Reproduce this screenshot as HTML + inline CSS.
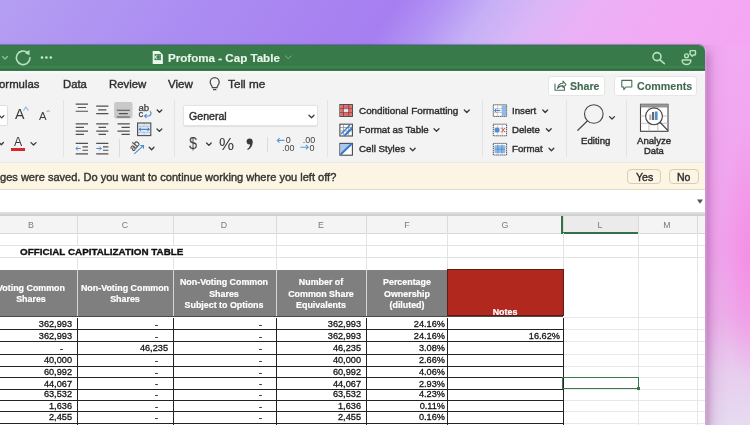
<!DOCTYPE html>
<html><head><meta charset="utf-8">
<style>
*{margin:0;padding:0;box-sizing:border-box}
html,body{width:750px;height:425px;overflow:hidden}
body{position:relative;font-family:"Liberation Sans",sans-serif;
 background:linear-gradient(125deg,#b49ef2 0%,#ab8cf2 20%,#a67ef0 38%,#b496f4 43%,#c6b0f6 47%,#dab6f7 52%,#eab0f6 57%,#f2aaf5 64%,#f4a6f2 76%,#f2a4ee 100%);}
.a{position:absolute}
#bg2{left:700px;top:45px;width:50px;height:380px;background:radial-gradient(ellipse 30px 130px at 50px 210px,rgba(246,135,226,.75),rgba(246,135,226,0)),linear-gradient(90deg,rgba(190,120,190,.18),rgba(190,120,190,0) 60%),linear-gradient(180deg,#f2aaf2 0%,#f0a4ec 55%,#ecb0ea 72%,#e8cdee 86%,#e6dbf0 100%)}
#shadow{left:704px;top:60px;width:10px;height:365px;background:linear-gradient(90deg,rgba(150,60,150,.25),rgba(150,60,150,0))}
#win{left:-10px;top:45px;width:715px;height:400px;background:#f3f3f3;border-top-right-radius:6px;overflow:hidden;box-shadow:0 -1px 1px rgba(60,70,110,.45),1.5px 0 0 rgba(250,215,250,.35),4px 6px 9px rgba(120,40,120,.38)}
#title{left:0;top:0;width:715px;height:26px;background:linear-gradient(180deg,#3a6e58 0,#387a4a 1px,#387a4a 100%)}
.t{position:absolute;white-space:pre;line-height:1;will-change:transform;-webkit-text-stroke:0.4px currentColor}
.n{-webkit-text-stroke:0.15px currentColor}
svg{position:absolute;overflow:visible}
</style></head><body>
<div id="bg2" class="a"></div>
<div id="win" class="a">
  <div id="title" class="a"></div>
  <div class="a" style="left:0;top:21.4px;width:715px;height:1.4px;background:#3e8250"></div>
  <div class="a" style="left:0;top:23.6px;width:715px;height:1.9px;background:#336f44"></div>
  <div class="a" style="left:0;top:26px;width:715px;height:3.2px;background:linear-gradient(180deg,#fbfcfb,#f5f5f5)"></div>
</div>

<!-- title bar content -->
<svg style="left:0;top:0" width="750" height="75" viewBox="0 0 750 75">
  <g fill="none" stroke="#8fc49a" stroke-width="1.2" stroke-linecap="round" stroke-linejoin="round">
    <path d="M2.5 56.5 L5 59 L7.5 56.5"/>
  </g>
  <g fill="none" stroke="#b9e3c0" stroke-width="1.55" stroke-linecap="round">
    <path d="M27.6 52.6 A6.8 6.8 0 1 0 30 57.8"/>
  </g>
  <path d="M24.8 52.9 L29.6 50 L29.4 55.2 Z" fill="#b9e3c0"/>
  <g fill="#c8eccc"><circle cx="42" cy="57.5" r="1.3"/><circle cx="46.4" cy="57.5" r="1.3"/><circle cx="50.8" cy="57.5" r="1.3"/></g>
  <!-- doc icon -->
  <path d="M152.7 50.9 H159.2 L162.9 54.7 V63.9 H152.7 Z" fill="#eaf7ec"/>
  <rect x="154.4" y="54.1" width="6.6" height="6" fill="#3f7f50"/>
  <path d="M161 55.8 H159 M161 58.2 H159" stroke="#9cc8a6" stroke-width="0.7"/>
  <path d="M153.6 55.2 L157.2 59.1 M157.2 55.2 L153.6 59.1" stroke="#bfe6c6" stroke-width="1.2"/>
  <g fill="none" stroke="#7fb88a" stroke-width="1" stroke-linecap="round"><path d="M285.5 56 L288.3 58.6 L291 56"/></g>
  <!-- search -->
  <g fill="none" stroke="#b9e3c0" stroke-width="1.55" stroke-linecap="round">
    <circle cx="657" cy="56.6" r="4.0"/><path d="M660 59.8 L664.4 63.6"/>
  </g>
  <!-- people -->
  <g fill="none" stroke="#b9e3c0" stroke-width="1.45" stroke-linejoin="round">
    <circle cx="686.5" cy="55.8" r="1.9"/>
    <path d="M682.6 60 H690.4 Q691 60 690.8 60.8 A4.2 3.6 0 0 1 682.2 60.8 Q682 60 682.6 60 Z"/>
    <path d="M690.8 50.6 H694.8 Q695.5 50.6 695.5 51.3 V54.2 Q695.5 54.9 694.8 54.9 H693.4 L692.2 56.3 L691.3 54.9 Q690.1 54.9 690.1 54.2 V51.3 Q690.1 50.6 690.8 50.6 Z"/>
  </g>
</svg>
<div class="t" style="left:168px;top:52px;font-size:11.6px;font-weight:bold;color:#e9f6ea;-webkit-text-stroke:0.15px #e9f6ea">Profoma - Cap Table</div>

<!-- tabs -->
<svg style="left:0;top:0" width="750" height="100"><g fill="none" stroke="#4a4a4a" stroke-width="1.3" stroke-linejoin="round"><path d="M212.4 87.6 C212.2 85.6 210.2 84.6 210.2 82.2 A4.5 4.5 0 0 1 219.2 82.2 C219.2 84.6 217.2 85.6 217 87.6 Z"/><path d="M213 89.6 H216.4"/></g></svg>

<div class="t" style="left:-0.7px;top:78.9px;font-size:11.4px;color:#2e2e2e">ormulas</div>
<div class="t" style="left:63px;top:78.9px;font-size:11.3px;color:#2e2e2e">Data</div>
<div class="t" style="left:108.6px;top:78.9px;font-size:11.4px;color:#2e2e2e">Review</div>
<div class="t" style="left:167.6px;top:78.4px;font-size:11.6px;color:#2e2e2e">View</div>
<div class="t" style="left:228px;top:78.2px;font-size:11.75px;color:#2e2e2e">Tell me</div>


<!-- share / comments -->
<div class="a" style="left:547.6px;top:75.6px;width:57px;height:20px;background:#fff;border:1px solid #e6e6e6;border-radius:3px"></div>
<div class="a" style="left:614.4px;top:75.6px;width:82.5px;height:20px;background:#fff;border:1px solid #e6e6e6;border-radius:3px"></div>
<svg style="left:0;top:0" width="750" height="100">
  <g fill="none" stroke="#4a6e58" stroke-width="1.1" stroke-linejoin="round" stroke-linecap="round">
    <path d="M555 84 V90.3 H564.5 V87.5"/>
    <path d="M557.5 88.5 C558 85 560 83.3 563 83.3 V81 L566 84.6 L563 87.7 V85.6 C560.6 85.6 558.8 86.6 557.5 88.5 Z"/>
    <path d="M621.8 80.4 H631.8 V87 H626 L623.8 89.6 V87 H621.8 Z"/>
  </g>
</svg>
<div class="t" style="left:569.6px;top:81px;font-size:10.6px;font-weight:bold;color:#41694f;-webkit-text-stroke:0.1px #41694f">Share</div>
<div class="t" style="left:637px;top:81px;font-size:10.7px;font-weight:bold;color:#41694f;-webkit-text-stroke:0.1px #41694f">Comments</div>

<!-- ribbon separators -->
<div class="a" style="left:62.7px;top:100.2px;width:1px;height:56.5px;background:#e3e3e3"></div>
<div class="a" style="left:174px;top:100.2px;width:1px;height:56.5px;background:#e3e3e3"></div>
<div class="a" style="left:327.3px;top:100.2px;width:1px;height:56.5px;background:#e3e3e3"></div>
<div class="a" style="left:481.7px;top:100.2px;width:1px;height:56.5px;background:#e3e3e3"></div>
<div class="a" style="left:566.2px;top:100.2px;width:1px;height:56.5px;background:#e3e3e3"></div>
<div class="a" style="left:626.4px;top:100.2px;width:1px;height:56.5px;background:#e3e3e3"></div>
<div class="a" style="left:119px;top:139px;width:1px;height:18px;background:#dcdcdc"></div>
<div class="a" style="left:267.3px;top:137px;width:1px;height:15px;background:#dcdcdc"></div>

<!-- font group -->
<div class="a" style="left:-5px;top:105.2px;width:12.7px;height:20.4px;background:#fff;border:1px solid #dedede;border-radius:2px"></div>
<div class="t" style="left:14.5px;top:107.4px;font-size:14.2px;color:#3a3a3a;-webkit-text-stroke:0">A</div>
<div class="t" style="left:38.6px;top:110.8px;font-size:11.3px;color:#3a3a3a;-webkit-text-stroke:0">A</div>
<div class="t" style="left:14.3px;top:136px;font-size:12.2px;color:#3a3a3a;-webkit-text-stroke:0">A</div>
<div class="a" style="left:10.9px;top:147.6px;width:14.3px;height:3px;background:#d8262a"></div>

<!-- general dropdown -->
<div class="a" style="left:182.8px;top:105.2px;width:135px;height:21px;background:#fff;border:1px solid #e4e4e4;border-radius:2px;box-shadow:0 0.5px 1px rgba(0,0,0,.08)"></div>
<div class="t" style="left:188.5px;top:110.6px;font-size:10.6px;color:#2e2e2e">General</div>
<div class="t" style="left:188.8px;top:135px;font-size:17.2px;color:#3a3a3a;-webkit-text-stroke:0;transform:scaleX(0.84);transform-origin:0 0">$</div>
<div class="t" style="left:218.9px;top:135.6px;font-size:17px;color:#3a3a3a;-webkit-text-stroke:0">%</div>

<!-- styles group -->
<div class="t" style="left:358.6px;top:105.6px;font-size:9.9px;color:#2e2e2e">Conditional Formatting</div>
<div class="t" style="left:358.6px;top:125.3px;font-size:9.75px;color:#2e2e2e">Format as Table</div>
<div class="t" style="left:358.6px;top:144.3px;font-size:9.75px;color:#2e2e2e">Cell Styles</div>

<!-- cells group -->
<div class="t" style="left:512.4px;top:105.6px;font-size:9.7px;color:#2e2e2e">Insert</div>
<div class="t" style="left:512.4px;top:125.3px;font-size:9.6px;color:#2e2e2e">Delete</div>
<div class="t" style="left:512.4px;top:144.3px;font-size:9.7px;color:#2e2e2e">Format</div>

<div class="t" style="left:581px;top:135.5px;font-size:9.65px;color:#2e2e2e">Editing</div>
<div class="t" style="left:637px;top:135.5px;font-size:9.6px;color:#2e2e2e">Analyze</div>
<div class="t" style="left:644.3px;top:145.5px;font-size:9.4px;color:#2e2e2e">Data</div>

<!--RIB-->
<svg style="left:0;top:0" width="750" height="170">
<path d="M-0.5 115.6 L1.7 117.9 L3.9 115.6" fill="none" stroke="#3a3a3a" stroke-width="1.3" stroke-linecap="round" stroke-linejoin="round"/>
<path d="M-0.8 142.5 L1.2999999999999998 144.8 L3.4 142.5" fill="none" stroke="#3a3a3a" stroke-width="1.3" stroke-linecap="round" stroke-linejoin="round"/>
<path d="M31 142.6 L33.5 145 L36 142.6" fill="none" stroke="#3a3a3a" stroke-width="1.3" stroke-linecap="round" stroke-linejoin="round"/>
<path d="M157.2 110 L159.5 112.3 L161.8 110" fill="none" stroke="#3a3a3a" stroke-width="1.3" stroke-linecap="round" stroke-linejoin="round"/>
<path d="M157 129 L159.4 131.4 L161.8 129" fill="none" stroke="#3a3a3a" stroke-width="1.3" stroke-linecap="round" stroke-linejoin="round"/>
<path d="M149.2 147.3 L151.6 149.7 L154 147.3" fill="none" stroke="#3a3a3a" stroke-width="1.3" stroke-linecap="round" stroke-linejoin="round"/>
<path d="M206.6 143 L208.89999999999998 145.4 L211.2 143" fill="none" stroke="#3a3a3a" stroke-width="1.3" stroke-linecap="round" stroke-linejoin="round"/>
<path d="M309 115.2 L311.5 117.7 L314 115.2" fill="none" stroke="#3a3a3a" stroke-width="1.3" stroke-linecap="round" stroke-linejoin="round"/>
<path d="M464.3 110 L466.8 112.5 L469.3 110" fill="none" stroke="#3a3a3a" stroke-width="1.3" stroke-linecap="round" stroke-linejoin="round"/>
<path d="M434 128.8 L436.5 131.3 L439 128.8" fill="none" stroke="#3a3a3a" stroke-width="1.3" stroke-linecap="round" stroke-linejoin="round"/>
<path d="M410.2 148.2 L412.7 150.7 L415.2 148.2" fill="none" stroke="#3a3a3a" stroke-width="1.3" stroke-linecap="round" stroke-linejoin="round"/>
<path d="M542.8 110 L545.2 112.5 L547.6 110" fill="none" stroke="#3a3a3a" stroke-width="1.3" stroke-linecap="round" stroke-linejoin="round"/>
<path d="M546.4 128.8 L548.8 131.3 L551.2 128.8" fill="none" stroke="#3a3a3a" stroke-width="1.3" stroke-linecap="round" stroke-linejoin="round"/>
<path d="M549 148.2 L551.4 150.7 L553.8 148.2" fill="none" stroke="#3a3a3a" stroke-width="1.3" stroke-linecap="round" stroke-linejoin="round"/>
<path d="M609.5 116.6 L612.0 119 L614.5 116.6" fill="none" stroke="#3a3a3a" stroke-width="1.3" stroke-linecap="round" stroke-linejoin="round"/>
<path d="M23.4 110.6 L25.9 107 L28.4 110.6" fill="none" stroke="#8fbde6" stroke-width="1.1"/>
<path d="M46.6 112 L48.2 110.4 L49.8 112" fill="none" stroke="#888" stroke-width="0.9"/>
<rect x="114.1" y="102" width="18.4" height="16.4" rx="2" fill="#c9c9c9"/>
<path d="M75.7 104.1H88 M75.7 111.2H88 M77.7 107.5H86 M96.2 106.1H108.4 M96.2 113.6H108.4 M98.2 109.8H106.4 M116.8 110.2H129.8 M116.8 117.0H129.8 M118.8 113.6H127.8 M75.7 123.9H88 M96.2 123.9H108.4 M117.5 123.9H129.8 M75.7 127.3H84 M98.5 127.3H106 M121.5 127.3H129.8 M75.7 131.1H88 M96.2 131.1H108.4 M117.5 131.1H129.8 M75.7 134.4H84 M98.5 134.4H106 M121.5 134.4H129.8 M75.7 143.4H88 M96.2 143.4H108.4 M75.7 153.9H88 M96.2 153.9H108.4 M82.5 146.8H88 M103 146.8H108.4 M82.5 150.2H88 M103 150.2H108.4" stroke="#505050" stroke-width="1.15" fill="none"/>
<path d="M75.9 148.5 H80.8 M77.8 146.6 L75.9 148.5 L77.8 150.4" stroke="#4a8fd0" stroke-width="1" fill="none"/>
<path d="M96.3 148.5 H101.2 M99.3 146.6 L101.2 148.5 L99.3 150.4" stroke="#4a8fd0" stroke-width="1" fill="none"/>
<text x="138.5" y="111.2" font-family="Liberation Sans" font-size="9.6" fill="#404040" stroke="#404040" stroke-width="0.25">ab</text>
<text x="138.5" y="117" font-family="Liberation Sans" font-size="9.6" fill="#404040" stroke="#404040" stroke-width="0.25">c</text>
<path d="M150 111.2 C151.6 112.4 151.4 115.6 148.8 116 H144.6 M146.5 114.1 L144.6 116 L146.5 117.9" stroke="#4a8fd0" stroke-width="1.15" fill="none"/>
<rect x="137.6" y="123" width="13.2" height="12.6" fill="#dce9f6" stroke="#4a4a4a" stroke-width="1.1"/>
<path d="M137.6 126.3 H150.8 M137.6 132.3 H150.8 M144.2 123 V126.3 M144.2 132.3 V135.6" stroke="#7a8a9a" stroke-width="0.6" stroke-dasharray="0.8 0.6"/>
<path d="M139.2 129.3 H149.2 M140.8 127.7 L139.2 129.3 L140.8 130.9 M147.6 127.7 L149.2 129.3 L147.6 130.9" stroke="#2d6fb8" stroke-width="1" fill="none"/>
<text x="0" y="0" font-family="Liberation Sans" font-size="9.6" fill="#404040" stroke="#404040" stroke-width="0.25" transform="translate(133.6 151.8) rotate(-50)">ab</text>
<path d="M134.2 153.9 L143.4 145.7 M140.4 145.6 H143.5 V148.7" stroke="#4a8fd0" stroke-width="1.1" fill="none"/>
<circle cx="249.6" cy="141.4" r="3.0" fill="#3a3a3a"/><path d="M252.5 141.6 C252.9 145.5 251.2 148.4 247.8 150 L247.2 149.1 C249.3 147.6 250.2 146 250.2 143.8 Z" fill="#3a3a3a"/>
<path d="M277.3 140.4 H284.4 M279.5 138.2 L277.3 140.4 L279.5 142.6" stroke="#5a9ad8" stroke-width="1.1" fill="none"/>
<text x="285.8" y="143.4" font-family="Liberation Sans" font-size="9" fill="#444">0</text>
<text x="282" y="150.9" font-family="Liberation Sans" font-size="9" fill="#444">.00</text>
<text x="302.8" y="143.4" font-family="Liberation Sans" font-size="9" fill="#444">.00</text>
<path d="M300.4 147.2 H308.2 M306 145 L308.2 147.2 L306 149.4" stroke="#5a9ad8" stroke-width="1.1" fill="none"/>
<text x="309.4" y="150.9" font-family="Liberation Sans" font-size="9" fill="#444">0</text>
<rect x="339.9" y="104.6" width="12.5" height="11.8" fill="#fff" stroke="#484848" stroke-width="1.1"/>
<rect x="340.4" y="105.1" width="11.5" height="3.5" fill="#e06a6a"/><rect x="340.4" y="112.5" width="11.5" height="3.4" fill="#e06a6a"/><rect x="340.4" y="108.6" width="3.1" height="3.9" fill="#e06a6a"/><rect x="348.6" y="108.6" width="3.3" height="3.9" fill="#e06a6a"/><rect x="343.5" y="108.6" width="5.1" height="3.9" fill="#dfe8f6"/>
<path d="M339.9 108.6 H352.4 M339.9 112.5 H352.4 M343.5 104.6 V116.4 M348.6 104.6 V116.4" stroke="#7a3a3a" stroke-width="0.7"/>
<rect x="339.9" y="124.2" width="12.5" height="11.8" fill="#fff" stroke="#484848" stroke-width="1.1"/>
<path d="M339.9 127.5 H352.4 M339.9 131 H352.4 M343.5 124.2 V136 M348.6 124.2 V136" stroke="#888" stroke-width="0.7"/>
<path d="M343 135.5 L352 126.5 V128.5 L345.5 135.5 Z" fill="#4a8ad8"/><path d="M341 134 L350 125 M344.6 136 L352.4 128.2" stroke="#3a78c8" stroke-width="1.3"/>
<rect x="339.9" y="143.4" width="12.5" height="11.8" fill="#fff" stroke="#484848" stroke-width="1.1"/>
<path d="M340.4 143.9 H351.9 L340.4 154.7 Z" fill="#a8c8ee"/><path d="M340.6 154.5 L351.8 143.8" stroke="#3a78c8" stroke-width="2"/>
<rect x="493.3" y="104.8" width="13.3" height="11.6" fill="#fff" stroke="#444" stroke-width="1" stroke-dasharray="1.3 0.7"/>
<path d="M493.3 108.7 H506.6 M493.3 112.5 H506.6 M497.7 104.8 V116.4 M502.2 104.8 V116.4" stroke="#aaa" stroke-width="0.6"/>
<rect x="493.3" y="124.2" width="13.3" height="11.6" fill="#fff" stroke="#444" stroke-width="1" stroke-dasharray="1.3 0.7"/>
<path d="M493.3 128.1 H506.6 M493.3 131.9 H506.6 M497.7 124.2 V135.8 M502.2 124.2 V135.8" stroke="#aaa" stroke-width="0.6"/>
<rect x="493.3" y="143.4" width="13.3" height="11.6" fill="#fff" stroke="#444" stroke-width="1" stroke-dasharray="1.3 0.7"/>
<path d="M493.3 147.3 H506.6 M493.3 151.1 H506.6 M497.7 143.4 V155.0 M502.2 143.4 V155.0" stroke="#aaa" stroke-width="0.6"/>
<rect x="501.8" y="105.3" width="4.3" height="10.6" fill="#8dbbe8"/>
<path d="M494.5 110.6 H500.5 M496.5 108.6 L494.5 110.6 L496.5 112.6" stroke="#3d7fd0" stroke-width="1" fill="none"/>
<circle cx="497" cy="130" r="2.5" fill="#4d8ed8"/><path d="M501.6 128 L505 132 M505 128 L501.6 132" stroke="#e05050" stroke-width="1"/>
<rect x="494.6" y="145.2" width="10.6" height="8" fill="#8dbbe8"/><path d="M494.6 149.2 H505.2 M497.9 145.2 V153.2 M501.9 145.2 V153.2" stroke="#3d6fb0" stroke-width="0.5"/>
<circle cx="593.8" cy="114" r="9.3" fill="none" stroke="#4a4a4a" stroke-width="1.15"/><path d="M587.3 121 L577.8 130.3" stroke="#4a4a4a" stroke-width="1.2" stroke-linecap="round"/>
<rect x="640.5" y="104.3" width="27.5" height="27" fill="#fff" stroke="#444" stroke-width="1.1"/>
<rect x="640.5" y="104.3" width="27.5" height="2.6" fill="#9a9a9a"/><path d="M640.5 107 H668" stroke="#666" stroke-width="0.6"/>
<path d="M640.5 116 H668 M640.5 123.3 H668 M649 107 V131.3 M657.8 107 V131.3" stroke="#aaa" stroke-width="0.7"/>
<circle cx="654" cy="116.3" r="8.4" fill="#fff" stroke="#444" stroke-width="1.15"/>
<path d="M660 122.3 L668 130.6" stroke="#444" stroke-width="1.3"/>
<rect x="649.3" y="114.5" width="2" height="5.5" fill="#aaa"/><rect x="652" y="112" width="2.2" height="8" fill="#666"/><rect x="655" y="111.5" width="2.6" height="8.5" fill="#4f8fd8"/>
</svg>
<!--/RIB-->
<!-- ribbon bottom / notification -->
<div class="a" style="left:0;top:161.8px;width:705px;height:1.5px;background:#e9e9e9"></div>
<div class="a" style="left:0;top:163px;width:705px;height:26px;background:#fcf5e3"></div>
<div class="a" style="left:0;top:188.6px;width:705px;height:1.2px;background:#e3d9c5"></div>
<div class="t" style="left:0.3px;top:171.5px;font-size:11.05px;color:#333">ges were saved. Do you want to continue working where you left off?</div>
<div class="a" style="left:627.2px;top:168.7px;width:34.3px;height:15px;background:#fcf5e3;border:1px solid #d9cdb4;border-radius:4px"></div>
<div class="a" style="left:669.2px;top:168.7px;width:30px;height:15px;background:#fcf5e3;border:1px solid #d9cdb4;border-radius:4px"></div>
<div class="t" style="left:635.6px;top:172px;font-size:10.6px;color:#2e2e2e">Yes</div>
<div class="t" style="left:676.9px;top:172px;font-size:10.5px;color:#2e2e2e">No</div>

<!-- formula bar -->
<div class="a" style="left:0;top:190px;width:705px;height:21.6px;background:#fff"></div>
<svg style="left:0;top:0" width="750" height="210"><path d="M697 199.5 H703 L700 203.8 Z" fill="#555"/></svg>
<div class="a" style="left:0;top:211.5px;width:705px;height:4.3px;background:linear-gradient(180deg,#e4e4e4,#d4d4d4 60%,#cdcdcd)"></div>
<!--GRID-->
<div class="a" style="left:0.00px;top:233.30px;width:705.00px;height:200.00px;background:#fff"></div>
<div class="a" style="left:0.00px;top:215.60px;width:705.00px;height:17.70px;background:#f4f4f4"></div>
<div class="a" style="left:562.50px;top:215.60px;width:75.50px;height:17.70px;background:#ebebeb"></div>
<div class="a" style="left:77.30px;top:215.60px;width:1.00px;height:17.70px;background:#dadada"></div>
<div class="a" style="left:172.50px;top:215.60px;width:1.00px;height:17.70px;background:#dadada"></div>
<div class="a" style="left:276.40px;top:215.60px;width:1.00px;height:17.70px;background:#dadada"></div>
<div class="a" style="left:366.00px;top:215.60px;width:1.00px;height:17.70px;background:#dadada"></div>
<div class="a" style="left:447.40px;top:215.60px;width:1.00px;height:17.70px;background:#dadada"></div>
<div class="a" style="left:562.50px;top:215.60px;width:1.00px;height:17.70px;background:#dadada"></div>
<div class="a" style="left:638.00px;top:215.60px;width:1.00px;height:17.70px;background:#dadada"></div>
<div class="a" style="left:696.80px;top:215.60px;width:1.00px;height:17.70px;background:#dadada"></div>
<div class="a" style="left:0.00px;top:232.80px;width:705.00px;height:0.80px;background:#d8d8d8"></div>
<div class="a" style="left:561.40px;top:215.60px;width:2.00px;height:18.50px;background:#35704a"></div>
<div class="a" style="left:561.40px;top:232.30px;width:76.80px;height:1.90px;background:#35704a"></div>
<div class="t" style="left:10.65px;width:40px;text-align:center;top:220.6px;font-size:8.8px;color:#7a7a7a;-webkit-text-stroke:0">B</div>
<div class="t" style="left:104.90px;width:40px;text-align:center;top:220.6px;font-size:8.8px;color:#7a7a7a;-webkit-text-stroke:0">C</div>
<div class="t" style="left:204.45px;width:40px;text-align:center;top:220.6px;font-size:8.8px;color:#7a7a7a;-webkit-text-stroke:0">D</div>
<div class="t" style="left:301.20px;width:40px;text-align:center;top:220.6px;font-size:8.8px;color:#7a7a7a;-webkit-text-stroke:0">E</div>
<div class="t" style="left:386.70px;width:40px;text-align:center;top:220.6px;font-size:8.8px;color:#7a7a7a;-webkit-text-stroke:0">F</div>
<div class="t" style="left:484.95px;width:40px;text-align:center;top:220.6px;font-size:8.8px;color:#7a7a7a;-webkit-text-stroke:0">G</div>
<div class="t" style="left:580.25px;width:40px;text-align:center;top:220.6px;font-size:8.8px;color:#7a7a7a;-webkit-text-stroke:0">L</div>
<div class="t" style="left:647.40px;width:40px;text-align:center;top:220.6px;font-size:8.8px;color:#7a7a7a;-webkit-text-stroke:0">M</div>
<div class="a" style="left:0.00px;top:245.20px;width:705.00px;height:0.80px;background:#e3e3e3"></div>
<div class="a" style="left:0.00px;top:257.40px;width:705.00px;height:0.80px;background:#e3e3e3"></div>
<div class="a" style="left:77.30px;top:233.30px;width:0.80px;height:12.00px;background:#e3e3e3"></div>
<div class="a" style="left:77.30px;top:257.40px;width:0.80px;height:12.40px;background:#e3e3e3"></div>
<div class="a" style="left:172.50px;top:233.30px;width:0.80px;height:12.00px;background:#e3e3e3"></div>
<div class="a" style="left:172.50px;top:257.40px;width:0.80px;height:12.40px;background:#e3e3e3"></div>
<div class="a" style="left:276.40px;top:233.30px;width:0.80px;height:36.50px;background:#e3e3e3"></div>
<div class="a" style="left:366.00px;top:233.30px;width:0.80px;height:36.50px;background:#e3e3e3"></div>
<div class="a" style="left:447.40px;top:233.30px;width:0.80px;height:36.50px;background:#e3e3e3"></div>
<div class="a" style="left:562.50px;top:233.30px;width:0.80px;height:36.50px;background:#e3e3e3"></div>
<div class="a" style="left:638.00px;top:233.30px;width:0.80px;height:36.50px;background:#e3e3e3"></div>
<div class="a" style="left:696.80px;top:233.30px;width:0.80px;height:36.50px;background:#e3e3e3"></div>
<div class="t" style="left:20.30px;top:247.10px;font-size:9.85px;font-weight:bold;color:#111;-webkit-text-stroke:0.35px #111">OFFICIAL CAPITALIZATION TABLE</div>
<div class="a" style="left:0.00px;top:269.50px;width:447.40px;height:46.10px;background:#7f7f7f"></div>
<div class="a" style="left:77.30px;top:269.50px;width:0.90px;height:46.10px;background:#d6d6d6"></div>
<div class="a" style="left:172.50px;top:269.50px;width:0.90px;height:46.10px;background:#d6d6d6"></div>
<div class="a" style="left:276.40px;top:269.50px;width:0.90px;height:46.10px;background:#d6d6d6"></div>
<div class="a" style="left:366.00px;top:269.50px;width:0.90px;height:46.10px;background:#d6d6d6"></div>
<div class="a" style="left:447.40px;top:268.80px;width:116.20px;height:46.80px;background:#b1281f;border:1px solid #5e1c16"></div>
<div class="a" style="left:0.00px;top:315.60px;width:563.00px;height:1.90px;background:#4a4a4a"></div>
<div class="t" style="left:-29.35px;width:120px;text-align:center;top:283.90px;font-size:8.9px;font-weight:bold;color:#fff;-webkit-text-stroke:0.2px #fff">Voting Common</div>
<div class="t" style="left:-29.35px;width:120px;text-align:center;top:295.10px;font-size:8.9px;font-weight:bold;color:#fff;-webkit-text-stroke:0.2px #fff">Shares</div>
<div class="t" style="left:64.90px;width:120px;text-align:center;top:283.90px;font-size:8.9px;font-weight:bold;color:#fff;-webkit-text-stroke:0.2px #fff">Non-Voting Common</div>
<div class="t" style="left:64.90px;width:120px;text-align:center;top:295.10px;font-size:8.9px;font-weight:bold;color:#fff;-webkit-text-stroke:0.2px #fff">Shares</div>
<div class="t" style="left:164.45px;width:120px;text-align:center;top:278.30px;font-size:8.9px;font-weight:bold;color:#fff;-webkit-text-stroke:0.2px #fff">Non-Voting Common</div>
<div class="t" style="left:164.45px;width:120px;text-align:center;top:289.50px;font-size:8.9px;font-weight:bold;color:#fff;-webkit-text-stroke:0.2px #fff">Shares</div>
<div class="t" style="left:164.45px;width:120px;text-align:center;top:300.70px;font-size:8.9px;font-weight:bold;color:#fff;-webkit-text-stroke:0.2px #fff">Subject to Options</div>
<div class="t" style="left:261.20px;width:120px;text-align:center;top:278.30px;font-size:8.9px;font-weight:bold;color:#fff;-webkit-text-stroke:0.2px #fff">Number of</div>
<div class="t" style="left:261.20px;width:120px;text-align:center;top:289.50px;font-size:8.9px;font-weight:bold;color:#fff;-webkit-text-stroke:0.2px #fff">Common Share</div>
<div class="t" style="left:261.20px;width:120px;text-align:center;top:300.70px;font-size:8.9px;font-weight:bold;color:#fff;-webkit-text-stroke:0.2px #fff">Equivalents</div>
<div class="t" style="left:346.70px;width:120px;text-align:center;top:278.30px;font-size:8.9px;font-weight:bold;color:#fff;-webkit-text-stroke:0.2px #fff">Percentage</div>
<div class="t" style="left:346.70px;width:120px;text-align:center;top:289.50px;font-size:8.9px;font-weight:bold;color:#fff;-webkit-text-stroke:0.2px #fff">Ownership</div>
<div class="t" style="left:346.70px;width:120px;text-align:center;top:300.70px;font-size:8.9px;font-weight:bold;color:#fff;-webkit-text-stroke:0.2px #fff">(diluted)</div>
<div class="t" style="left:444.95px;width:120px;text-align:center;top:307.80px;font-size:8.9px;font-weight:bold;color:#fff;-webkit-text-stroke:0.2px #fff">Notes</div>
<div class="a" style="left:0.00px;top:328.60px;width:562.50px;height:1.00px;background:#222"></div>
<div class="a" style="left:562.50px;top:328.60px;width:142.50px;height:0.80px;background:#e8e8e8"></div>
<div class="a" style="left:0.00px;top:340.60px;width:562.50px;height:1.00px;background:#222"></div>
<div class="a" style="left:562.50px;top:340.60px;width:142.50px;height:0.80px;background:#e8e8e8"></div>
<div class="a" style="left:0.00px;top:353.50px;width:562.50px;height:1.00px;background:#222"></div>
<div class="a" style="left:562.50px;top:353.50px;width:142.50px;height:0.80px;background:#e8e8e8"></div>
<div class="a" style="left:0.00px;top:365.50px;width:562.50px;height:1.00px;background:#222"></div>
<div class="a" style="left:562.50px;top:365.50px;width:142.50px;height:0.80px;background:#e8e8e8"></div>
<div class="a" style="left:0.00px;top:377.20px;width:562.50px;height:1.00px;background:#222"></div>
<div class="a" style="left:562.50px;top:377.20px;width:142.50px;height:0.80px;background:#e8e8e8"></div>
<div class="a" style="left:0.00px;top:388.80px;width:562.50px;height:1.00px;background:#222"></div>
<div class="a" style="left:562.50px;top:388.80px;width:142.50px;height:0.80px;background:#e8e8e8"></div>
<div class="a" style="left:0.00px;top:399.70px;width:562.50px;height:1.00px;background:#222"></div>
<div class="a" style="left:562.50px;top:399.70px;width:142.50px;height:0.80px;background:#e8e8e8"></div>
<div class="a" style="left:0.00px;top:411.20px;width:562.50px;height:1.00px;background:#222"></div>
<div class="a" style="left:562.50px;top:411.20px;width:142.50px;height:0.80px;background:#e8e8e8"></div>
<div class="a" style="left:0.00px;top:422.70px;width:562.50px;height:1.00px;background:#222"></div>
<div class="a" style="left:562.50px;top:422.70px;width:142.50px;height:0.80px;background:#e8e8e8"></div>
<div class="a" style="left:0.00px;top:434.50px;width:562.50px;height:1.00px;background:#222"></div>
<div class="a" style="left:562.50px;top:434.50px;width:142.50px;height:0.80px;background:#e8e8e8"></div>
<div class="a" style="left:562.50px;top:317.00px;width:142.50px;height:0.80px;background:#e8e8e8"></div>
<div class="a" style="left:77.30px;top:317.50px;width:1.00px;height:120.00px;background:#222"></div>
<div class="a" style="left:172.50px;top:317.50px;width:1.00px;height:120.00px;background:#222"></div>
<div class="a" style="left:276.40px;top:317.50px;width:1.00px;height:120.00px;background:#222"></div>
<div class="a" style="left:366.00px;top:317.50px;width:1.00px;height:120.00px;background:#222"></div>
<div class="a" style="left:447.40px;top:317.50px;width:1.00px;height:120.00px;background:#222"></div>
<div class="a" style="left:562.50px;top:317.50px;width:1.00px;height:120.00px;background:#222"></div>
<div class="a" style="left:638.00px;top:269.50px;width:0.80px;height:160.00px;background:#e6e6e6"></div>
<div class="a" style="left:696.80px;top:269.50px;width:0.80px;height:160.00px;background:#e6e6e6"></div>
<div class="a" style="left:638.00px;top:233.30px;width:0.80px;height:36.50px;background:#e3e3e3"></div>
<div class="a" style="left:696.80px;top:233.30px;width:0.80px;height:36.50px;background:#e3e3e3"></div>
<div class="t" style="left:-7.70px;width:80px;text-align:right;top:320.00px;font-size:9.2px;color:#151515;-webkit-text-stroke:0.3px #151515">362,993</div>
<div class="t" style="left:77.90px;width:80px;text-align:right;top:320.60px;font-size:9.2px;color:#151515;-webkit-text-stroke:0.3px #151515">-</div>
<div class="t" style="left:181.80px;width:80px;text-align:right;top:320.60px;font-size:9.2px;color:#151515;-webkit-text-stroke:0.3px #151515">-</div>
<div class="t" style="left:281.20px;width:80px;text-align:right;top:320.00px;font-size:9.2px;color:#151515;-webkit-text-stroke:0.3px #151515">362,993</div>
<div class="t" style="left:364.60px;width:80px;text-align:right;top:320.00px;font-size:9.2px;color:#151515;-webkit-text-stroke:0.3px #151515">24.16%</div>
<div class="t" style="left:-7.70px;width:80px;text-align:right;top:332.00px;font-size:9.2px;color:#151515;-webkit-text-stroke:0.3px #151515">362,993</div>
<div class="t" style="left:77.90px;width:80px;text-align:right;top:332.60px;font-size:9.2px;color:#151515;-webkit-text-stroke:0.3px #151515">-</div>
<div class="t" style="left:181.80px;width:80px;text-align:right;top:332.60px;font-size:9.2px;color:#151515;-webkit-text-stroke:0.3px #151515">-</div>
<div class="t" style="left:281.20px;width:80px;text-align:right;top:332.00px;font-size:9.2px;color:#151515;-webkit-text-stroke:0.3px #151515">362,993</div>
<div class="t" style="left:364.60px;width:80px;text-align:right;top:332.00px;font-size:9.2px;color:#151515;-webkit-text-stroke:0.3px #151515">24.16%</div>
<div class="t" style="left:480.00px;width:80px;text-align:right;top:332.00px;font-size:9.2px;color:#151515;-webkit-text-stroke:0.3px #151515">16.62%</div>
<div class="t" style="left:-17.30px;width:80px;text-align:right;top:344.80px;font-size:9.2px;color:#151515;-webkit-text-stroke:0.3px #151515">-</div>
<div class="t" style="left:88.00px;width:80px;text-align:right;top:344.20px;font-size:9.2px;color:#151515;-webkit-text-stroke:0.3px #151515">46,235</div>
<div class="t" style="left:181.80px;width:80px;text-align:right;top:344.80px;font-size:9.2px;color:#151515;-webkit-text-stroke:0.3px #151515">-</div>
<div class="t" style="left:281.20px;width:80px;text-align:right;top:344.20px;font-size:9.2px;color:#151515;-webkit-text-stroke:0.3px #151515">46,235</div>
<div class="t" style="left:364.60px;width:80px;text-align:right;top:344.20px;font-size:9.2px;color:#151515;-webkit-text-stroke:0.3px #151515">3.08%</div>
<div class="t" style="left:-7.70px;width:80px;text-align:right;top:356.20px;font-size:9.2px;color:#151515;-webkit-text-stroke:0.3px #151515">40,000</div>
<div class="t" style="left:77.90px;width:80px;text-align:right;top:356.80px;font-size:9.2px;color:#151515;-webkit-text-stroke:0.3px #151515">-</div>
<div class="t" style="left:181.80px;width:80px;text-align:right;top:356.80px;font-size:9.2px;color:#151515;-webkit-text-stroke:0.3px #151515">-</div>
<div class="t" style="left:281.20px;width:80px;text-align:right;top:356.20px;font-size:9.2px;color:#151515;-webkit-text-stroke:0.3px #151515">40,000</div>
<div class="t" style="left:364.60px;width:80px;text-align:right;top:356.20px;font-size:9.2px;color:#151515;-webkit-text-stroke:0.3px #151515">2.66%</div>
<div class="t" style="left:-7.70px;width:80px;text-align:right;top:367.90px;font-size:9.2px;color:#151515;-webkit-text-stroke:0.3px #151515">60,992</div>
<div class="t" style="left:77.90px;width:80px;text-align:right;top:368.50px;font-size:9.2px;color:#151515;-webkit-text-stroke:0.3px #151515">-</div>
<div class="t" style="left:181.80px;width:80px;text-align:right;top:368.50px;font-size:9.2px;color:#151515;-webkit-text-stroke:0.3px #151515">-</div>
<div class="t" style="left:281.20px;width:80px;text-align:right;top:367.90px;font-size:9.2px;color:#151515;-webkit-text-stroke:0.3px #151515">60,992</div>
<div class="t" style="left:364.60px;width:80px;text-align:right;top:367.90px;font-size:9.2px;color:#151515;-webkit-text-stroke:0.3px #151515">4.06%</div>
<div class="t" style="left:-7.70px;width:80px;text-align:right;top:379.50px;font-size:9.2px;color:#151515;-webkit-text-stroke:0.3px #151515">44,067</div>
<div class="t" style="left:77.90px;width:80px;text-align:right;top:380.10px;font-size:9.2px;color:#151515;-webkit-text-stroke:0.3px #151515">-</div>
<div class="t" style="left:181.80px;width:80px;text-align:right;top:380.10px;font-size:9.2px;color:#151515;-webkit-text-stroke:0.3px #151515">-</div>
<div class="t" style="left:281.20px;width:80px;text-align:right;top:379.50px;font-size:9.2px;color:#151515;-webkit-text-stroke:0.3px #151515">44,067</div>
<div class="t" style="left:364.60px;width:80px;text-align:right;top:379.50px;font-size:9.2px;color:#151515;-webkit-text-stroke:0.3px #151515">2.93%</div>
<div class="t" style="left:-7.70px;width:80px;text-align:right;top:390.40px;font-size:9.2px;color:#151515;-webkit-text-stroke:0.3px #151515">63,532</div>
<div class="t" style="left:77.90px;width:80px;text-align:right;top:391.00px;font-size:9.2px;color:#151515;-webkit-text-stroke:0.3px #151515">-</div>
<div class="t" style="left:181.80px;width:80px;text-align:right;top:391.00px;font-size:9.2px;color:#151515;-webkit-text-stroke:0.3px #151515">-</div>
<div class="t" style="left:281.20px;width:80px;text-align:right;top:390.40px;font-size:9.2px;color:#151515;-webkit-text-stroke:0.3px #151515">63,532</div>
<div class="t" style="left:364.60px;width:80px;text-align:right;top:390.40px;font-size:9.2px;color:#151515;-webkit-text-stroke:0.3px #151515">4.23%</div>
<div class="t" style="left:-7.70px;width:80px;text-align:right;top:401.90px;font-size:9.2px;color:#151515;-webkit-text-stroke:0.3px #151515">1,636</div>
<div class="t" style="left:77.90px;width:80px;text-align:right;top:402.50px;font-size:9.2px;color:#151515;-webkit-text-stroke:0.3px #151515">-</div>
<div class="t" style="left:181.80px;width:80px;text-align:right;top:402.50px;font-size:9.2px;color:#151515;-webkit-text-stroke:0.3px #151515">-</div>
<div class="t" style="left:281.20px;width:80px;text-align:right;top:401.90px;font-size:9.2px;color:#151515;-webkit-text-stroke:0.3px #151515">1,636</div>
<div class="t" style="left:364.60px;width:80px;text-align:right;top:401.90px;font-size:9.2px;color:#151515;-webkit-text-stroke:0.3px #151515">0.11%</div>
<div class="t" style="left:-7.70px;width:80px;text-align:right;top:413.40px;font-size:9.2px;color:#151515;-webkit-text-stroke:0.3px #151515">2,455</div>
<div class="t" style="left:77.90px;width:80px;text-align:right;top:414.00px;font-size:9.2px;color:#151515;-webkit-text-stroke:0.3px #151515">-</div>
<div class="t" style="left:181.80px;width:80px;text-align:right;top:414.00px;font-size:9.2px;color:#151515;-webkit-text-stroke:0.3px #151515">-</div>
<div class="t" style="left:281.20px;width:80px;text-align:right;top:413.40px;font-size:9.2px;color:#151515;-webkit-text-stroke:0.3px #151515">2,455</div>
<div class="t" style="left:364.60px;width:80px;text-align:right;top:413.40px;font-size:9.2px;color:#151515;-webkit-text-stroke:0.3px #151515">0.16%</div>
<div class="a" style="left:561.80px;top:376.60px;width:77.00px;height:12.20px;border:1.3px solid #3a7a4a"></div>
<div class="a" style="left:636.80px;top:386.80px;width:3.20px;height:3.20px;background:#3a7a4a"></div>
<!--/GRID-->
</body></html>
